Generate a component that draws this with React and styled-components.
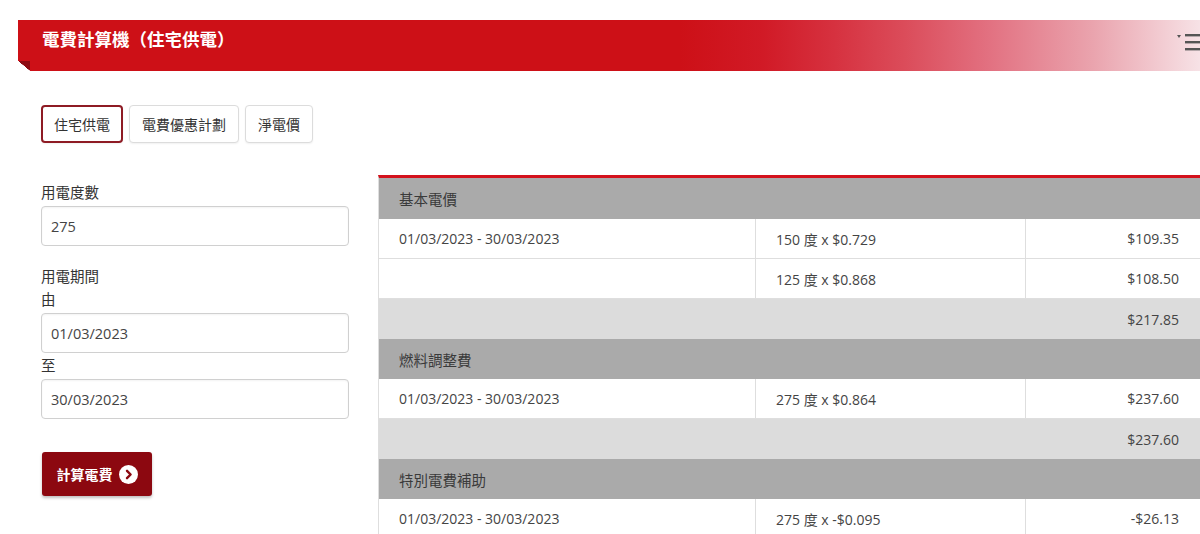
import React from 'react';
import styled, { createGlobalStyle } from 'styled-components';

const GlobalStyle = createGlobalStyle`
  html, body {
    margin: 0;
    padding: 0;
    background: #fff;
    overflow: hidden;
  }
  body {
    font-family: "Open Sans", "Noto Sans CJK TC", sans-serif;
    color: #444;
  }
`

const Page = styled.div`
  width: 1200px;
  height: 534px;
  padding-top: 20px;
  box-sizing: border-box;
  overflow: hidden;
`

const TitleBar = styled.header`
  position: relative;
  margin-left: 18px;
  height: 51px;
  display: flex;
  align-items: flex-start;
  padding: 8px 0 0 24px;
  box-sizing: border-box;
  background: linear-gradient(
    to right,
    #cd1017 0%,
    #cd1017 56%,
    #d11a26 63%,
    #d6313f 69%,
    #db4c5a 75%,
    #e27080 82%,
    #eaa4ae 91%,
    #f7e2e6 100%
  );

  &::before {
    content: '';
    position: absolute;
    left: 0;
    bottom: 0;
    width: 12px;
    height: 10px;
    background: linear-gradient(to top right, #fff 50%, #8e0a12 52%);
  }
`

const Title = styled.h1`
  margin: 0;
  font-size: 17.5px;
  line-height: 22px;
  font-weight: 700;
  color: #fff;
`

const MenuIcon = styled.svg`
  margin-left: auto;
  margin-top: 3px;
  flex: none;
`

const Main = styled.div`
  padding: 34px 0 0 41px;
`

const Tabs = styled.div`
  display: flex;
  gap: 6px;
`

const Tab = styled.button`
  height: 38px;
  padding: 0 ${p => (p.$active ? '11px' : '12px')};
  border: ${p => (p.$active ? '2px solid #8e1b24' : '1px solid #dcdcdc')};
  border-radius: 4px;
  background: #fff;
  font-family: inherit;
  font-size: 14px;
  color: #333;
  box-shadow: 0 1px 2px rgba(0, 0, 0, 0.06);
`

const Body = styled.div`
  display: flex;
  gap: 29px;
  margin-top: 32px;
`

const Form = styled.div`
  width: 308px;
  flex: none;
  padding-top: 8px;
`

const Label = styled.div`
  font-size: 14.5px;
  line-height: 20px;
  color: #333;
  margin-top: ${p => p.$gap || 0}px;
  margin-bottom: 3px;
`

const Input = styled.div`
  height: 40px;
  box-sizing: border-box;
  border: 1px solid #d0d0d0;
  border-radius: 4px;
  padding: 0 9px;
  display: flex;
  align-items: center;
  font-size: 14.5px;
  color: #444;
  box-shadow: inset 0 1px 2px rgba(0, 0, 0, 0.05);
`

const SubmitButton = styled.button`
  margin: 33px 0 0 1px;
  width: 110px;
  height: 44px;
  border: none;
  border-radius: 3px;
  background: #8c0810;
  color: #fff;
  font-family: inherit;
  font-size: 14px;
  font-weight: 700;
  display: flex;
  align-items: center;
  justify-content: center;
  gap: 6px;
  box-shadow: 0 2px 3px rgba(0, 0, 0, 0.25);
`

const Table = styled.div`
  flex: 1;
  border-top: 3px solid #d3121c;
  border-left: 1px solid #dedede;
`

const Row = styled.div`
  display: grid;
  grid-template-columns: 376px 270px 1fr;
  height: ${p => (p.$first ? '41px' : '40px')};
  box-sizing: border-box;
  background: ${p => (p.$kind === 'head' ? '#aaaaaa' : p.$kind === 'total' ? '#dcdcdc' : '#fff')};
  border-bottom: ${p => (p.$kind === 'line' ? '1px solid #dedede' : 'none')};
`

const Cell = styled.div`
  display: flex;
  align-items: center;
  padding: 0 21px 0 20px;
  color: ${p => (p.$head ? '#3a3a3a' : '#444')};
  font-size: ${p => (p.$head ? '14.5px' : '14px')};
  justify-content: ${p => (p.$right ? 'flex-end' : 'flex-start')};
  border-left: ${p => (p.$divided ? '1px solid #dedede' : 'none')};
  grid-column: ${p => p.$span || 'auto'};
`

const ArrowCircle = () => (
  <svg width="19" height="19" viewBox="0 0 19 19">
    <circle cx="9.5" cy="9.5" r="9.5" fill="#fff" />
    <path d="M8 5.8 L11.6 9.5 L8 13.2" fill="none" stroke="#8c0810" strokeWidth="2.4" strokeLinecap="round" strokeLinejoin="round" />
  </svg>
);

const sections = [
  {
    title: '基本電價',
    lines: [
      ['01/03/2023 - 30/03/2023', '150 度 x $0.729', '$109.35'],
      ['', '125 度 x $0.868', '$108.50'],
    ],
    total: '$217.85',
  },
  {
    title: '燃料調整費',
    lines: [['01/03/2023 - 30/03/2023', '275 度 x $0.864', '$237.60']],
    total: '$237.60',
  },
  {
    title: '特別電費補助',
    lines: [['01/03/2023 - 30/03/2023', '275 度 x -$0.095', '-$26.13']],
  },
];

export default function App() {
  return (
    <Page>
      <GlobalStyle />
      <TitleBar>
        <Title>電費計算機（住宅供電）</Title>
        <MenuIcon width="23" height="22" viewBox="0 0 23 22">
          <path d="M0 4 L4 4 L2 7 Z" fill="#555" />
          <rect x="8" y="3" width="15" height="2.4" fill="#555" />
          <rect x="8" y="10" width="15" height="2.4" fill="#555" />
          <rect x="8" y="17" width="15" height="2.4" fill="#555" />
        </MenuIcon>
      </TitleBar>
      <Main>
        <Tabs>
          <Tab $active>住宅供電</Tab>
          <Tab>電費優惠計劃</Tab>
          <Tab>淨電價</Tab>
        </Tabs>
        <Body>
          <Form>
            <Label>用電度數</Label>
            <Input>275</Input>
            <Label $gap={21}>用電期間</Label>
            <Label>由</Label>
            <Input>01/03/2023</Input>
            <Label $gap={3}>至</Label>
            <Input>30/03/2023</Input>
            <SubmitButton>
              計算電費
              <ArrowCircle />
            </SubmitButton>
          </Form>
          <Table>
            {sections.map((s, i) => (
              <React.Fragment key={s.title}>
                <Row $kind="head" $first={i === 0}>
                  <Cell $head $span="1 / -1">{s.title}</Cell>
                </Row>
                {s.lines.map((l, j) => (
                  <Row $kind="line" key={j}>
                    <Cell>{l[0]}</Cell>
                    <Cell $divided>{l[1]}</Cell>
                    <Cell $divided $right>{l[2]}</Cell>
                  </Row>
                ))}
                {s.total && (
                  <Row $kind="total">
                    <Cell $right $span="1 / -1">{s.total}</Cell>
                  </Row>
                )}
              </React.Fragment>
            ))}
          </Table>
        </Body>
      </Main>
    </Page>
  );
}
